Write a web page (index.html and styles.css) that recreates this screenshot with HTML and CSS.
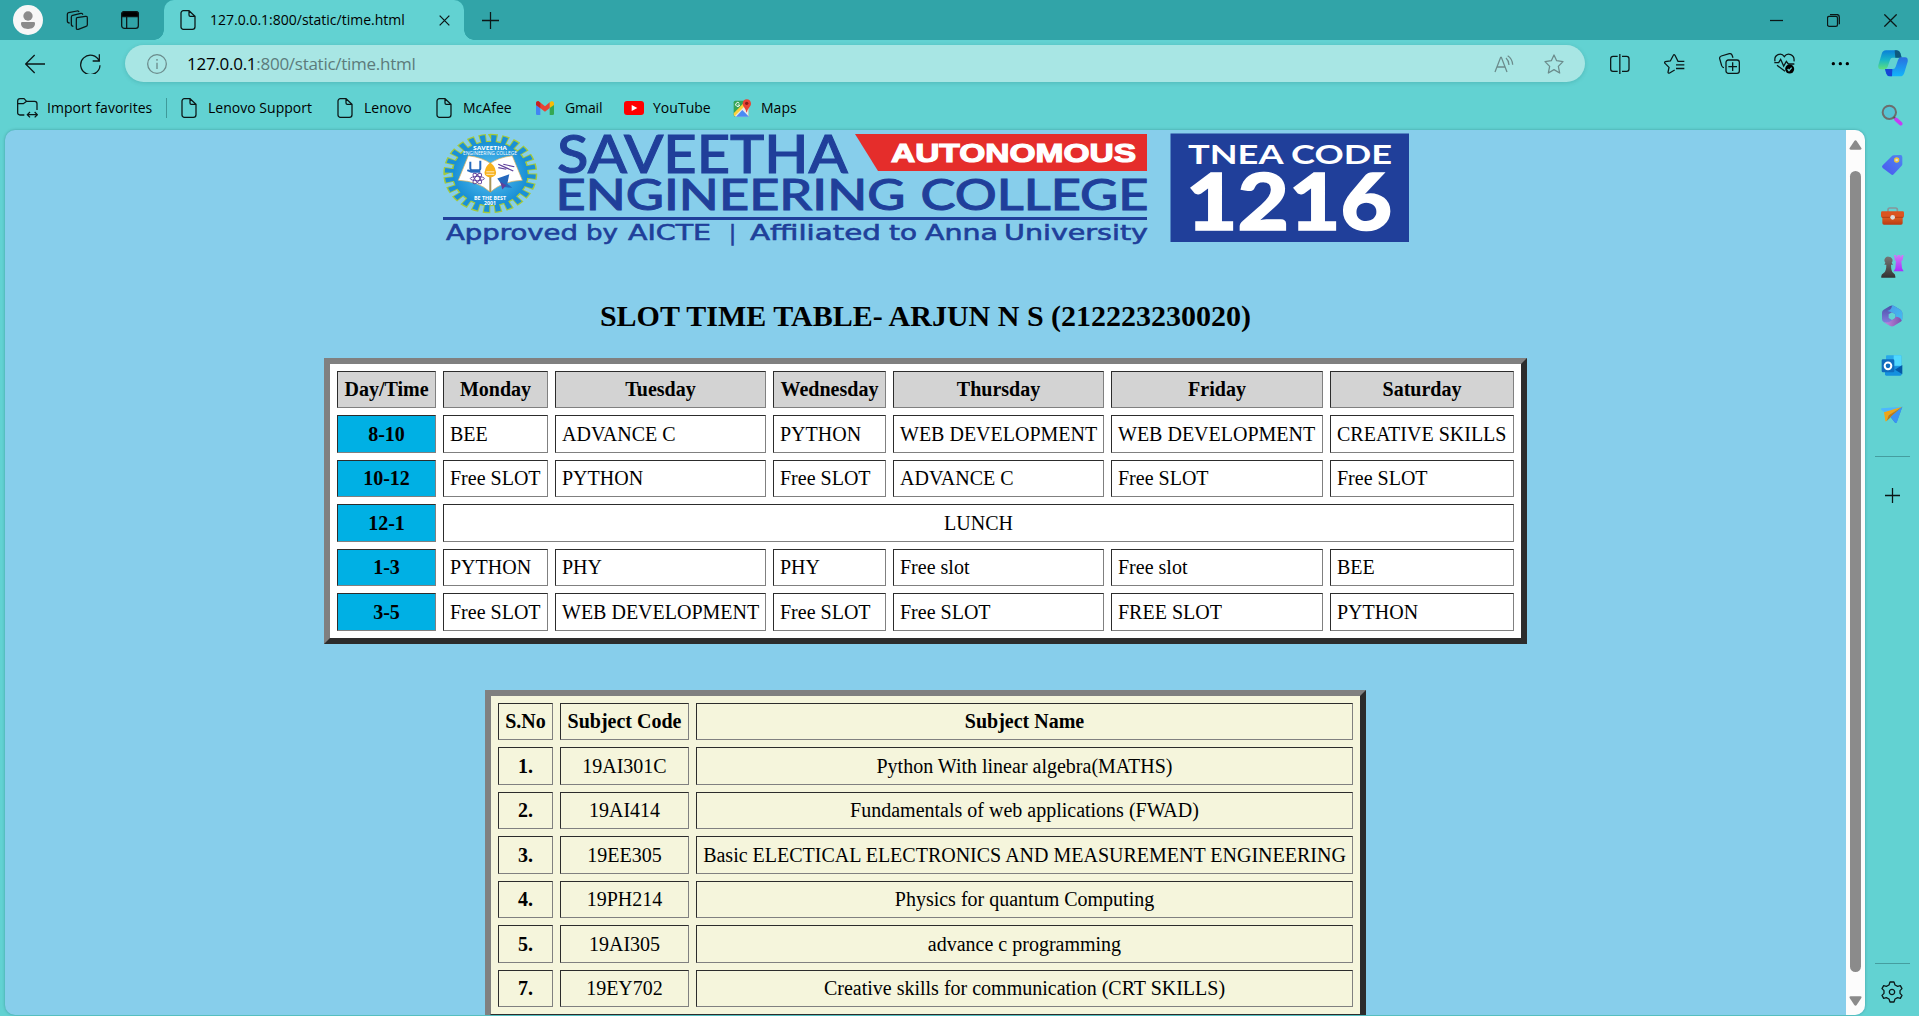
FILE: index.html
```html
<!DOCTYPE html>
<html lang="en">
<head>
<meta charset="utf-8">
<title>127.0.0.1:800/static/time.html</title>
<link rel="stylesheet" href="styles.css">
</head>
<body>
<svg class="defs" width="0" height="0" aria-hidden="true">
  <defs>
    <symbol id="page" viewBox="0 0 48 60"><path d="M10 2h17l18 17v31a8 8 0 0 1-8 8H10a7 7 0 0 1-7-7V9a7 7 0 0 1 7-7zM27 2v13a4 4 0 0 0 4 4h14"/></symbol>
    <linearGradient id="tagG" x1="0" y1="1" x2="1" y2="0"><stop offset="0" stop-color="#4a55f0"/><stop offset="1" stop-color="#4f86f0"/></linearGradient>
    <linearGradient id="cpA" x1="0" y1="0" x2="0" y2="1"><stop offset="0" stop-color="#0b7fd8"/><stop offset=".5" stop-color="#17b5c8"/><stop offset="1" stop-color="#5fe07c"/></linearGradient>
    <linearGradient id="cpB" x1="0" y1="0" x2="0" y2="1"><stop offset="0" stop-color="#2a6fdf"/><stop offset="1" stop-color="#12b4fa"/></linearGradient>
    <linearGradient id="purp" x1="0" y1="0" x2="0" y2="1"><stop offset="0" stop-color="#cf7bf5"/><stop offset="1" stop-color="#a52fff"/></linearGradient>
    <linearGradient id="boxG" x1="0" y1="0" x2="0" y2="1"><stop offset="0" stop-color="#e86a28"/><stop offset="1" stop-color="#b93a12"/></linearGradient>
    <linearGradient id="greyG" x1="0" y1="0" x2="0" y2="1"><stop offset="0" stop-color="#777"/><stop offset="1" stop-color="#333"/></linearGradient>
    <linearGradient id="m1" x1="0" y1="0" x2="0" y2="1"><stop offset="0" stop-color="#4a4fa8"/><stop offset="1" stop-color="#8f86e8"/></linearGradient>
    <linearGradient id="m2" x1="0" y1="0" x2="1" y2="1"><stop offset="0" stop-color="#4a9be8"/><stop offset="1" stop-color="#42bdf0"/></linearGradient>
    <linearGradient id="m3" x1="0" y1="0" x2="1" y2="0"><stop offset="0" stop-color="#c58be0"/><stop offset="1" stop-color="#7b52ad"/></linearGradient>
    <radialGradient id="sealG"><stop offset="0" stop-color="#5cc4f2"/><stop offset="1" stop-color="#1a90d6"/></radialGradient>
  </defs>
</svg>

<header class="titlebar">
  <div class="slot avatar-slot"><svg width="30" height="30" viewBox="0 0 90 90"><circle cx="45" cy="45" r="45" fill="#f7f7f7"/><circle cx="45" cy="33" r="14" fill="#8b8b8b"/><path d="M24 55q0-4 4-4h34q4 0 4 4c0 12-8 17-21 17s-21-5-21-17z" fill="#8b8b8b"/></svg></div>
  <div class="slot workspace-slot"><svg class="line" width="22" height="20" viewBox="0 0 66 60"><path d="M33 22l25-4q6-1 6 5v20q0 4-4 5L37 57q-6 2-6-4V26q0-4 2-4zM22 48q-6 0-6-6V20q0-4 4-5l24-6q6-1 6 4M11 38q-7 0-7-6V12q0-4 4-5l25-5q5-1 6 3" transform="translate(0 1)"/></svg></div>
  <div class="slot vtab-slot"><svg class="line" width="18" height="18" viewBox="0 0 54 54"><rect x="2" y="2" width="50" height="50" rx="8"/><path d="M2 17V10q0-8 8-8h34q8 0 8 8v7z" fill="#000"/><path d="M17 17v35"/></svg></div>
  <div class="tab">
    <svg class="line" width="16" height="20"><use href="#page"/></svg>
    <span class="tab-title">127.0.0.1:800/static/time.html</span>
    <svg class="line tab-close" width="11" height="11" viewBox="0 0 33 33"><path d="M2 2l29 29M31 2L2 31"/></svg>
  </div>
  <div class="slot newtab-slot"><svg class="line" width="17" height="17" viewBox="0 0 51 51"><path d="M25.500 0v51M0 25.500h51"/></svg></div>
  <div class="window-buttons">
    <div class="slot win"><svg class="line" width="13" height="13" viewBox="0 0 39 39"><path d="M0 19.500h39"/></svg></div>
    <div class="slot win"><svg class="line" width="13" height="13" viewBox="0 0 39 39"><rect x="1.500" y="7" width="30" height="30" rx="5"/><path d="M9 1.500h20q8 0 8 8v21"/></svg></div>
    <div class="slot win"><svg class="line" width="13" height="13" viewBox="0 0 39 39"><path d="M1 1l37 37M38 1L1 38"/></svg></div>
  </div>
</header>

<div class="toolbar">
  <div class="slot back"><svg class="line" width="20" height="20" viewBox="0 0 60 60"><path d="M60 30H2M29 3L2 30l27 27"/></svg></div>
  <div class="slot reload"><svg class="line" width="21" height="21" viewBox="0 0 63 63"><path d="M58 25A29 29 0 1 0 60 37M58 4v20H38"/></svg></div>
  <div class="omnibox">
    <svg class="grey" width="20" height="20" viewBox="0 0 60 60"><circle cx="30" cy="30" r="28"/><path d="M30 26v19M30 15v5" stroke-width="4"/></svg>
    <span class="url"><b>127.0.0.1</b>:800/static/time.html</span>
    <svg class="grey read" width="20" height="20" viewBox="0 0 60 60"><path d="M3 54L20 10h2l17 44M9 39h25M36 12q8 7 9 21M41 5q14 9 15 27"/></svg>
    <svg class="grey" width="20" height="20" viewBox="0 0 60 60"><path d="M30 3l8 17 19 3-14 14 4 20-17-10-17 10 4-20L3 23l19-3z" stroke-linejoin="round"/></svg>
  </div>
  <div class="actions">
    <div class="slot act"><svg class="line" width="20" height="20" viewBox="0 0 60 60"><path d="M23 7H9q-7 0-7 7v31q0 7 7 7h14M36 7h14q7 0 7 7v31q0 7-7 7H36M29.500 0v60"/></svg></div>
    <div class="slot act"><svg class="line" width="21" height="20" viewBox="0 0 63 60"><path d="M61 22H42L33 4q-3-4-5 0l-9 17-15 2q-4 2-1 5l12 12-3 15q1 4 5 2l15-9M36 32.500h25M36 43.500h25"/></svg></div>
    <div class="slot act"><svg class="line" width="21" height="21" viewBox="0 0 63 63"><rect x="21" y="21" width="40" height="40" rx="7"/><path d="M41 28v26M28 41h26M15 44q-5 0-7-6L2 17q-1-6 5-8l24-7q6-1 8 4l3 8"/></svg></div>
    <div class="slot act"><svg class="line" width="21" height="21" viewBox="0 0 63 63"><path d="M3 25C-1 4 22-3 31 11 40-3 63 4 60 25M1 29h13l6-10 9 20 8-14 6 8h18M9 37l24 18"/><circle cx="47" cy="48" r="13.500" fill="#000" stroke="none"/><path d="M41 48l4 5 8-9" stroke="#62d2d2"/></svg></div>
    <div class="slot act"><svg width="18" height="5" viewBox="0 0 54 15"><circle cx="7" cy="8" r="5"/><circle cx="28" cy="8" r="5"/><circle cx="49" cy="8" r="5"/></svg></div>
    <div class="slot copilot"><svg width="30" height="27" viewBox="0 0 90 81"><path d="M24 1h32q8 0 11 8l4 14H44q-6 0-8 7l-7 20q-3 8-10 8H9Q-1 58 1 46L11 12Q14 1 24 1z" fill="url(#cpA)"/><path d="M50 1h6q8 0 11 8l4 14H52z" fill="#0f5a7e"/><path d="M66 79H36q-8 0-11-8l-4-14h24q6 0 8-7l7-20q2-8 9-8h12q10 0 8 13L79 68q-3 11-13 11z" fill="url(#cpB)"/><path d="M42 79h-6q-8 0-11-8l-4-14h22z" fill="#1745d5"/></svg></div>
  </div>
</div>

<nav class="bookmarks">
  <div class="bm bm-import"><svg class="line" width="21" height="20" viewBox="0 0 63 60"><path d="M22 51H9q-7 0-7-7V9q0-7 7-7h12l8 8h24q7 0 7 7v19M2 17h17l10-7M33 50h26M39 42l-8 8 8 8M53 42l8 8-8 8"/></svg><span>Import favorites</span></div>
  <div class="bm bm-support"><svg class="line" width="16" height="20"><use href="#page"/></svg><span>Lenovo Support</span></div>
  <div class="bm bm-lenovo"><svg class="line" width="16" height="20"><use href="#page"/></svg><span>Lenovo</span></div>
  <div class="bm bm-mcafee"><svg class="line" width="16" height="20"><use href="#page"/></svg><span>McAfee</span></div>
  <div class="bm bm-gmail"><svg width="18" height="14" viewBox="0 0 54 42"><path d="M0 8l13 9v25H4q-4 0-4-4z" fill="#4285f4"/><path d="M54 8l-13 9v25h9q4 0 4-4z" fill="#34a853"/><path d="M41 4l5-3q8-2 8 6v5l-13 9z" fill="#fbbc04"/><path d="M0 12V7q0-8 8-6l19 15L41 4v17L27 32z" fill="#ea4335"/><path d="M0 12V7q0-8 8-6l5 4v16z" fill="#c5221f"/></svg><span>Gmail</span></div>
  <div class="bm bm-youtube"><svg width="20" height="14" viewBox="0 0 60 42"><rect width="60" height="42" rx="9" fill="#f00"/><path d="M23 12l17 9-17 9z" fill="#fff"/></svg><span>YouTube</span></div>
  <div class="bm bm-maps"><svg width="18" height="18" viewBox="0 0 54 54"><rect x="2" y="5" width="46" height="48" rx="5" fill="#35a456"/><path d="M3 48L38 13l9 10v30H8z" fill="#e8eaed"/><path d="M9 53l19-20 20 20z" fill="#4a8af4"/><path d="M2 43L35 9l6 7L5 52q-3-1-3-9z" fill="#fdd13a"/><path d="M19 13a6 6 0 1 0 1 5h-6" fill="none" stroke="#fff" stroke-width="3"/><path d="M41 1c8 0 13 6 13 13 0 9-10 12-12 26h-2c-2-14-11-17-11-26C29 7 34 1 41 1z" fill="#e94335"/><circle cx="41" cy="13" r="5" fill="#8c1d18"/></svg><span>Maps</span></div>
</nav>

<div class="workarea">
  <div class="viewport">
    <main class="page">
      <svg class="banner" width="968" height="114" viewBox="442 131 968 114">
        <g transform="translate(490.300 173.500) scale(1 .845)">
          <circle r="41.500" fill="none" stroke="#a4c93c" stroke-width="11" stroke-dasharray="7 4" pathLength="264"/>
          <circle r="38" fill="#1a90d6" stroke="#a4c93c" stroke-width="1.500"/>
          <circle r="41" fill="none" stroke="#1a90d6" stroke-width="9" stroke-dasharray="5 6" stroke-dashoffset="-1" pathLength="264"/>
          <circle r="37" fill="url(#sealG)"/>
          <path d="M-22-21Q-8-19 0-12 8-19 22-21L32 8Q12 9 0 22-12 9-32 8z" fill="#fff" stroke="#e0b565" stroke-width=".8"/>
          <path d="M0-10v32" stroke="#a89558" stroke-width="2"/>
          <path d="M0-13q5 5 5 9a5 6 0 0 1-10 0q0-4 5-9z" fill="#f8b21c"/><circle r="5.800" cy="-1" fill="#f8b21c"/><path d="M-4-2h8M-4 1h8" stroke="#fff" stroke-width=".8"/>
          <path d="M-20-14v8q0 2 3 2h5q2 0 2-2v-9M-23-4l4 2h9" fill="none" stroke="#2569bd" stroke-width="2"/>
          <g fill="none" stroke="#60419c" stroke-width="1"><ellipse cx="-13" cy="6" rx="7" ry="2.500"/><ellipse cx="-13" cy="6" rx="7" ry="2.500" transform="rotate(60 -13 6)"/><ellipse cx="-13" cy="6" rx="7" ry="2.500" transform="rotate(120 -13 6)"/></g>
          <path d="M8-11l15 8M13-11l11 3M8-7l8 2" stroke="#60419c" stroke-width="1.400"/><path d="M7 6l12-5-2 11 5 5-9-1z" fill="#2569bd"/><path d="M10 10l6 4-4 5z" fill="#60419c"/>
        </g>
        <g class="seal-text"><text x="473" y="149.500" textLength="34" lengthAdjust="spacingAndGlyphs">SAVEETHA</text><text class="thin" x="463" y="154.800" textLength="54" lengthAdjust="spacingAndGlyphs">ENGINEERING COLLEGE</text><text x="474" y="200" textLength="32" lengthAdjust="spacingAndGlyphs">BE THE BEST</text><text x="484" y="204.800" textLength="12" lengthAdjust="spacingAndGlyphs">2001</text></g>
        <g class="navy">
          <text class="name-top" x="557" y="172.500" textLength="291" lengthAdjust="spacingAndGlyphs">SAVEETHA</text>
          <g class="name-bottom">
            <text x="555.500" y="210" textLength="350" lengthAdjust="spacingAndGlyphs">ENGINEERING</text>
            <text x="920.500" y="210" textLength="228" lengthAdjust="spacingAndGlyphs">COLLEGE</text>
          </g>
          <rect x="443" y="217" width="704" height="3"/>
          <g class="approval">
            <text x="446" y="240" textLength="132" lengthAdjust="spacingAndGlyphs">Approved</text>
            <text x="586" y="240" textLength="32" lengthAdjust="spacingAndGlyphs">by</text>
            <text x="628" y="240" textLength="83" lengthAdjust="spacingAndGlyphs">AICTE</text>
            <text x="729" y="240">|</text>
            <text x="750" y="240" textLength="131" lengthAdjust="spacingAndGlyphs">Affiliated</text>
            <text x="889" y="240" textLength="28" lengthAdjust="spacingAndGlyphs">to</text>
            <text x="925" y="240" textLength="73" lengthAdjust="spacingAndGlyphs">Anna</text>
            <text x="1004" y="240" textLength="144" lengthAdjust="spacingAndGlyphs">University</text>
          </g>
          <rect x="1170.500" y="133.500" width="238.500" height="108.500"/>
        </g>
        <path d="M855 134h292v37H878z" fill="#e52d2b"/>
        <text class="autonomous" x="891" y="161.500" textLength="245" lengthAdjust="spacingAndGlyphs">AUTONOMOUS</text>
        <text class="tnea" x="1188" y="163.500" textLength="204" lengthAdjust="spacingAndGlyphs">TNEA CODE</text>
        <text class="code" x="1186" y="230" textLength="206" lengthAdjust="spacingAndGlyphs">1216</text>
      </svg>

      <h1>SLOT TIME TABLE- ARJUN N S (212223230020)</h1>

      <table class="slots">
        <colgroup><col class="c-day"><col class="c-mon"><col class="c-tue"><col class="c-wed"><col class="c-thu"><col class="c-fri"><col class="c-sat"></colgroup>
        <tr class="days"><th>Day/Time</th><th>Monday</th><th>Tuesday</th><th>Wednesday</th><th>Thursday</th><th>Friday</th><th>Saturday</th></tr>
        <tr><th>8-10</th><td>BEE</td><td>ADVANCE C</td><td>PYTHON</td><td>WEB DEVELOPMENT</td><td>WEB DEVELOPMENT</td><td>CREATIVE SKILLS</td></tr>
        <tr><th>10-12</th><td>Free SLOT</td><td>PYTHON</td><td>Free SLOT</td><td>ADVANCE C</td><td>Free SLOT</td><td>Free SLOT</td></tr>
        <tr><th>12-1</th><td class="lunch" colspan="6">LUNCH</td></tr>
        <tr><th>1-3</th><td>PYTHON</td><td>PHY</td><td>PHY</td><td>Free slot</td><td>Free slot</td><td>BEE</td></tr>
        <tr><th>3-5</th><td>Free SLOT</td><td>WEB DEVELOPMENT</td><td>Free SLOT</td><td>Free SLOT</td><td>FREE SLOT</td><td>PYTHON</td></tr>
      </table>

      <table class="subjects">
        <colgroup><col class="c-no"><col class="c-code"><col class="c-name"></colgroup>
        <tr><th>S.No</th><th>Subject Code</th><th>Subject Name</th></tr>
        <tr><th>1.</th><td>19AI301C</td><td>Python With linear algebra(MATHS)</td></tr>
        <tr><th>2.</th><td>19AI414</td><td>Fundamentals of web applications (FWAD)</td></tr>
        <tr><th>3.</th><td>19EE305</td><td>Basic ELECTICAL ELECTRONICS AND MEASUREMENT ENGINEERING</td></tr>
        <tr><th>4.</th><td>19PH214</td><td>Physics for quantum Computing</td></tr>
        <tr><th>5.</th><td>19AI305</td><td>advance c programming</td></tr>
        <tr><th>7.</th><td>19EY702</td><td>Creative skills for communication (CRT SKILLS)</td></tr>
      </table>
    </main>
    <div class="scrollbar">
      <svg width="13" height="10" viewBox="0 0 39 30"><path d="M16 3q3.500-4 7 0l14 21q2 4-3 5H5q-5-1-3-5z" fill="#8b8b8b"/></svg>
      <div class="thumb"></div>
      <svg width="13" height="10" viewBox="0 0 39 30"><path d="M16 27q3.500 4 7 0L37 6q2-4-3-5H5Q0 2 2 6z" fill="#8b8b8b"/></svg>
    </div>
  </div>

  <aside class="sidebar">
    <div class="slot app"><svg width="22" height="22" viewBox="0 0 66 66"><circle cx="25" cy="25" r="20" fill="#56c3d4" stroke="#6d6d6d" stroke-width="6"/><path d="M38 39l7 7" stroke="#555" stroke-width="6"/><path d="M45 46l14 13" stroke="#c63cf5" stroke-width="11" stroke-linecap="round"/></svg></div>
    <div class="slot app"><svg width="22" height="22" viewBox="0 0 66 66"><path d="M38 4l20-1q6 0 6 6v21q0 3-2 5L38 61q-4 4-8 0L5 42q-4-4 0-8L33 6q2-2 5-2z" fill="url(#tagG)"/><circle cx="47" cy="18" r="6" fill="#d5d8df" stroke="#f2c531" stroke-width="4"/></svg></div>
    <div class="slot app"><svg width="23" height="18" viewBox="0 0 69 54"><path d="M21 15V8q0-5 5-5h18q5 0 5 5v7" fill="none" stroke="#87969a" stroke-width="5"/><path d="M4 24h61v24q0 5-5 5H9q-5 0-5-5z" fill="url(#boxG)"/><rect x="0" y="13" width="69" height="18" rx="4" fill="#dc5420"/><path d="M2 31h65" stroke="#9f2f0e" stroke-width="2"/><circle cx="35" cy="31" r="7" fill="#dedede"/></svg></div>
    <div class="slot app"><svg width="23" height="24" viewBox="0 0 69 72"><path d="M39 3h6l2 7 3-7h7l3 7 2-7h6l-4 17h-3l2 23 5 9H38l5-9 2-23h-3z" fill="url(#purp)"/><path d="M23 8a11 11 0 0 1 9 18l4 6h-6q0 20 7 25 7 4 6 14H1q-2-10 7-14 8-5 8-25h-6l3-6A11 11 0 0 1 23 8z" fill="url(#greyG)"/></svg></div>
    <div class="slot app"><svg width="22" height="22" viewBox="0 0 66 66"><path fill-rule="evenodd" d="M27 3q6-3 12 0l19 11q6 4 6 10v17q0 5-5 8L39 62q-6 4-12 0L8 51q-5-3-5-9V23q0-6 5-9zM33 22l-10 6v11l10 6 10-6V28z" fill="url(#m1)"/><path d="M33 1q4 0 8 3l17 10q6 4 6 10v17q0 4-2 6L43 35v-7l-10-6-14-4q14-3 14-17z" fill="url(#m2)"/><path d="M62 47q-1 2-3 3L39 62q-6 4-12 0L9 52q14 3 22-5l12-8v-4q16 0 19 12z" fill="url(#m3)"/></svg></div>
    <div class="slot app"><svg width="22" height="21" viewBox="0 0 66 63"><rect x="15" y="1" width="46" height="35" rx="3" fill="#28a8ea"/><path d="M38 1h20q3 0 3 3v28H38z" fill="#50d9ff"/><path d="M12 34h50v24q0 4-4 4H16q-4 0-4-4z" fill="#1490df"/><path d="M64 30v28L42 44z" fill="#0358a7"/><rect x="2" y="13" width="38" height="39" rx="4" fill="#0f6cbd"/><circle cx="21" cy="32.500" r="10" fill="none" stroke="#fff" stroke-width="6"/></svg></div>
    <div class="slot app"><svg width="22" height="18" viewBox="0 0 66 54"><path d="M64 2L47 49q-2 4-5 1L29 34z" fill="#2d80e6"/><path d="M64 2L2 7q-4 1-1 4l9 8z" fill="#4db7ff"/><path d="M64 2L9 19l4 25q1 4 4 1l6-17z" fill="#f2a516"/><path d="M29 34l-12 11 6-17L64 2z" fill="#c07a18"/><path d="M64 2L29 32l14 18q3 2 5-2z" fill="#3b93f3"/></svg></div>
    <div class="rule"></div>
    <div class="slot add"><svg class="line" width="15" height="15" viewBox="0 0 45 45"><path d="M22.500 0v45M0 22.500h45"/></svg></div>
    <div class="rule rule-bottom"></div>
    <div class="slot settings"><svg class="line" width="22" height="22" viewBox="-33 -33 66 66"><circle r="8"/><path d="M-6-30H6L9-21 17-17 25-19 30-10 24-4V4L30 10 25 19 17 17 9 21 6 30H-6L-9 21-17 17-25 19-30 10-24 4V-4L-30-10-25-19-17-17-9-21z" stroke-linejoin="round"/></svg></div>
  </aside>
</div>
</body>
</html>
```
FILE: styles.css
```css
* { box-sizing: border-box; }

body {
  margin: 0;
  height: 1016px;
  overflow: hidden;
  display: flex;
  flex-direction: column;
  background: #62d2d2;
  color: #000;
  font-family: "Open Sans", "Noto Sans", sans-serif;
}

svg { display: block; flex: none; }
.defs { position: absolute; }
.line { fill: none; stroke: #0b1717; stroke-width: 3.8; }
.grey { fill: none; stroke: #6b8b8b; stroke-width: 3.8; }
.slot { display: flex; align-items: center; justify-content: center; flex: none; }

/* Title bar */
.titlebar { display: flex; flex: none; height: 40px; background: #31a4a8; }
.avatar-slot { width: 56px; }
.workspace-slot { width: 42px; }
.vtab-slot { width: 63px; margin-right: 3px; }
.tab {
  position: relative;
  display: flex;
  align-items: center;
  width: 300px;
  padding: 0 14px 0 16px;
  border-radius: 10px 10px 0 0;
  background: #62d2d2;
}
.tab::before, .tab::after {
  content: "";
  position: absolute;
  bottom: 0;
  width: 10px;
  height: 10px;
}
.tab::before { left: -10px; background: radial-gradient(circle at 0 0, #31a4a8 9.5px, #62d2d2 10px); }
.tab::after { right: -10px; background: radial-gradient(circle at 100% 0, #31a4a8 9.5px, #62d2d2 10px); }
.tab-title { margin-left: 14px; padding-bottom: 2px; font-size: 14px; white-space: nowrap; }
.tab-close { margin-left: auto; }
.newtab-slot { width: 53px; }
.window-buttons { display: flex; margin-left: auto; }
.win { width: 57px; }

/* Toolbar */
.toolbar { display: flex; align-items: center; flex: none; height: 47px; }
.back { width: 70px; }
.reload { width: 40px; margin-right: 15px; }
.omnibox {
  display: flex;
  align-items: center;
  width: 1460px;
  height: 37px;
  padding: 0 21px 0 22px;
  border-radius: 19px;
  background: #a8e6e4;
  box-shadow: 0 1px 4px rgba(0, 80, 80, .18);
}
.url { margin-left: 20px; font-size: 17px; color: #5c7b7b; letter-spacing: -.27px; white-space: nowrap; }
.url b { color: #000; font-weight: 400; }
.read { margin: 0 30px 0 auto; }
.actions { display: flex; margin-left: 7px; }
.act { width: 55px; }
.copilot { width: 52px; }

/* Favorites bar */
.bookmarks { display: flex; flex: none; height: 43px; padding: 0 0 1px 17px; font-size: 14px; }
.bm { display: flex; align-items: center; flex: none; white-space: nowrap; letter-spacing: .02px; }
.bm span { margin-left: 11px; padding-bottom: 2px; }
.bm-import { position: relative; width: 164px; }
.bm-import span { margin-left: 9px; }
.bm-import::after { content: ""; position: absolute; left: 149px; top: 11px; width: 1px; height: 20px; background: #3f9a9a; }
.bm-support { width: 156px; }
.bm-lenovo { width: 99px; }
.bm-mcafee { width: 100px; }
.bm-gmail { width: 88px; letter-spacing: -.1px; }
.bm-youtube { width: 109px; }
.bm-youtube span { margin-left: 9px; }
.bm-maps span { margin-left: 10px; }

/* Work area */
.workarea { display: flex; flex: none; height: 885px; }
.viewport {
  display: flex;
  width: 1860px;
  margin-left: 5px;
  overflow: hidden;
  border-radius: 10px;
  background: #87ceeb;
  box-shadow: 0 0 3px rgba(0, 60, 70, .35);
}
.page { width: 1841px; overflow: hidden; font-family: "Liberation Serif", "Times New Roman", serif; }
.banner { margin: 1px auto 0; position: relative; left: .5px; overflow: visible; }

.navy { fill: #203f9a; }
.name-top { font: 500 52.5px Lato, sans-serif; stroke: #203f9a; stroke-width: 1; }
.name-bottom { font: 500 42.5px Lato, sans-serif; stroke: #203f9a; stroke-width: .9; }
.approval { font: 21px "DejaVu Sans", sans-serif; stroke: #203f9a; stroke-width: .6; }
.autonomous { font: bold 26.5px "Liberation Sans", sans-serif; fill: #fff; stroke: #fff; stroke-width: 1.2; }
.tnea { font: bold 27px Lato, sans-serif; fill: #fff; }
.code { font: 900 79px Lato, sans-serif; fill: #fff; stroke: #fff; stroke-width: 1.5; }
.seal-text { font: bold 5.5px "Open Sans", sans-serif; fill: #fff; }
.thin { font-size: 4.6px; font-weight: 400; }

h1 {
  margin: 54px 0 25px;
  font-size: 30px;
  line-height: 34px;
  font-weight: bold;
  text-align: center;
}

table {
  margin: 0 auto;
  table-layout: fixed;
  border-style: solid;
  border-width: 6px;
  border-color: #808080 #2c2c2c #2c2c2c #808080;
  border-collapse: separate;
  border-spacing: 7px;
  font-size: 20px;
  line-height: 23px;
}
th, td {
  height: 37px;
  padding: 6px;
  border: 1px solid;
  border-color: #2c2c2c #808080 #808080 #2c2c2c;
  white-space: nowrap;
}
tr:nth-child(even) > * { height: 38px; padding-top: 7px; }
.slots { width: 1203px; background: #fff; }
.slots th { background: #00b0e4; }
.slots .days th { background: #d3d3d3; }
.lunch { text-align: center; }
.c-day { width: 99px; }
.c-mon { width: 105px; }
.c-tue { width: 211px; }
.c-wed { width: 113px; }
.c-thu { width: 211px; }
.c-fri { width: 212px; }
.c-sat { width: 184px; }

.subjects { width: 881px; margin-top: 46px; background: #f5f5dc; text-align: center; }
.c-no { width: 55px; }
.c-code { width: 129px; }
.c-name { width: 657px; }

/* Scrollbar */
.scrollbar {
  display: flex;
  flex-direction: column;
  align-items: center;
  gap: 21px;
  width: 19px;
  padding: 10px 0 9px;
  background: #fcfcfc;
}
.thumb { flex: 1; width: 11px; margin-bottom: 3px; border-radius: 6px; background: #8b8b8b; }

/* Sidebar */
.sidebar { display: flex; flex-direction: column; align-items: center; width: 54px; margin-top: -40px; }
.app { height: 50px; width: 53px; }
.app:nth-child(3), .app:nth-child(4), .app:nth-child(5) { padding-top: 2px; }
.rule { width: 35px; height: 1px; margin-top: 16px; background: #459d9f; }
.add { height: 40px; margin-top: 18px; }
.rule-bottom { margin-top: auto; }
.settings { height: 40px; margin: 8px 0 3px; }
```
